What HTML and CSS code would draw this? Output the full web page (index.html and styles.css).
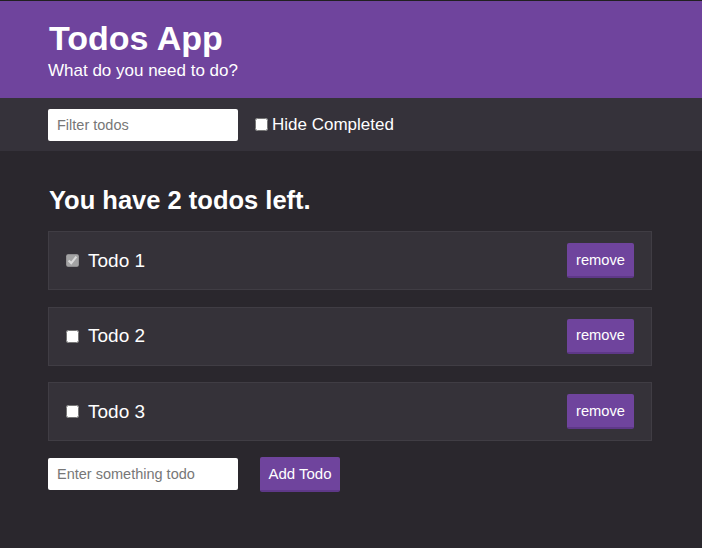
FILE: index.html
```html
<!DOCTYPE html>
<html>
<head>
<meta charset="utf-8">
<link rel="stylesheet" href="styles.css">
</head>
<body>
<header class="header">
  <div class="container">
    <h1 class="title">Todos App</h1>
    <p class="subtitle">What do you need to do?</p>
  </div>
</header>
<section class="filters">
  <div class="container filters-row">
    <input class="text-input" type="text" placeholder="Filter todos">
    <label class="check-label"><input type="checkbox" class="check"> Hide Completed</label>
  </div>
</section>
<main class="container main">
  <h2 class="summary">You have 2 todos left.</h2>
  <div class="todo">
    <label class="todo-label"><input type="checkbox" class="check" checked disabled> Todo 1</label>
    <button class="btn">remove</button>
  </div>
  <div class="todo">
    <label class="todo-label"><input type="checkbox" class="check"> Todo 2</label>
    <button class="btn">remove</button>
  </div>
  <div class="todo">
    <label class="todo-label"><input type="checkbox" class="check"> Todo 3</label>
    <button class="btn">remove</button>
  </div>
  <form class="add-form">
    <input class="text-input add-input" type="text" placeholder="Enter something todo">
    <button class="btn btn-add" type="button">Add Todo</button>
  </form>
</main>
</body>
</html>
```

FILE: styles.css
```css
html, body {
  margin: 0;
  padding: 0;
}
body {
  background: #2a272d;
  color: #ffffff;
  font-family: "Liberation Sans", Arial, sans-serif;
  min-height: 548px;
}
.container {
  margin-left: 48px;
  width: 604px;
}
.header {
  background: #6f449d;
  border-top: 1px solid #202020;
  height: 98px;
  box-sizing: border-box;
  padding-top: 17px;
}
.title {
  margin: 0;
  font-size: 34px;
  font-weight: 700;
  line-height: 40px;
  padding-left: 1px;
}
.subtitle {
  margin: 3px 0 0 0;
  font-size: 17px;
  line-height: 20px;
}
.filters {
  background: #35323a;
  height: 53px;
}
.filters-row {
  display: flex;
  align-items: center;
  height: 53px;
  gap: 17px;
}
.text-input {
  width: 190px;
  height: 32px;
  box-sizing: border-box;
  border: none;
  border-radius: 2px;
  background: #fff;
  padding: 0 9px;
  font-family: "Liberation Sans", Arial, sans-serif;
  font-size: 14.5px;
  color: #333;
  outline: none;
}
.text-input::placeholder {
  color: #777;
}
.check-label {
  display: flex;
  align-items: center;
  font-size: 17px;
  gap: 4px;
}
.check {
  margin: 0;
  width: 13px;
  height: 13px;
}
.main {
  padding-top: 34px;
}
.summary {
  margin: 0 0 16px 0;
  font-size: 25.5px;
  font-weight: 700;
  line-height: 30px;
  padding-left: 1px;
}
.todo {
  display: flex;
  align-items: center;
  justify-content: space-between;
  background: #353239;
  border: 1px solid #403d44;
  height: 59px;
  box-sizing: border-box;
  padding: 0 17px 0 17px;
  margin-bottom: 16.5px;
}
.todo-label {
  display: flex;
  align-items: center;
  gap: 9px;
  font-size: 19px;
}
.btn {
  background: #6f449d;
  color: #fff;
  border: none;
  border-bottom: 2px solid #5e3888;
  border-radius: 2px;
  height: 35px;
  padding: 0 9px;
  font-family: "Liberation Sans", Arial, sans-serif;
  font-size: 14.7px;
}
.add-form {
  display: flex;
  align-items: flex-start;
  gap: 22px;
  margin-top: -1px;
}
.add-input {
  margin-top: 1px;
}
.btn-add {
  width: 80px;
  padding: 0;
  font-size: 15px;
}
```
